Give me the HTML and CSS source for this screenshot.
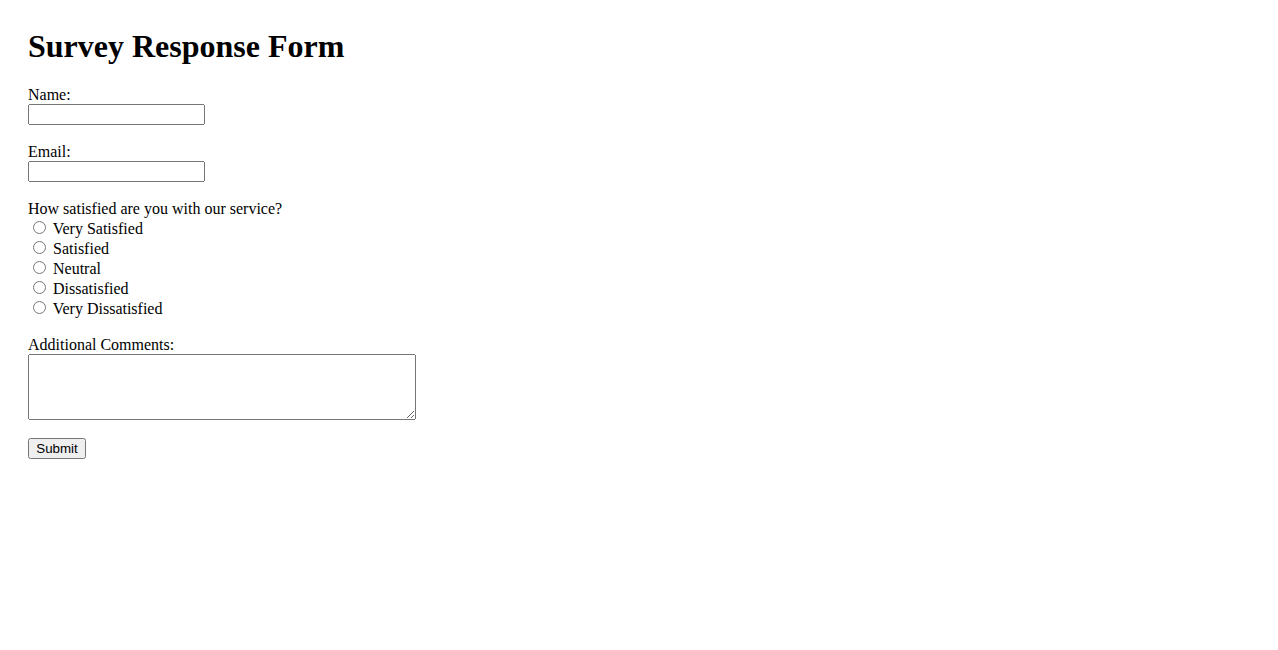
FILE: index.html
```html
<!DOCTYPE html>
<html lang="en">
<head>
  <meta charset="UTF-8">
  <meta name="viewport" content="width=device-width, initial-scale=1.0">
  <title>Survey Response Form</title>
  <link rel="stylesheet" href="styles.css">
</head>
<body>
  <h1>Survey Response Form</h1>
  <form action="#" method="post">
    <div class="form-group">
      <label for="name">Name:</label>
      <input type="text" id="name" name="name">
    </div>
    <div class="form-group">
      <label for="email">Email:</label>
      <input type="email" id="email" name="email">
    </div>
    <div class="form-group">
      <div class="question">How satisfied are you with our service?</div>
      <div class="option"><input type="radio" name="satisfaction" value="very-satisfied"> Very Satisfied</div>
      <div class="option"><input type="radio" name="satisfaction" value="satisfied"> Satisfied</div>
      <div class="option"><input type="radio" name="satisfaction" value="neutral"> Neutral</div>
      <div class="option"><input type="radio" name="satisfaction" value="dissatisfied"> Dissatisfied</div>
      <div class="option"><input type="radio" name="satisfaction" value="very-dissatisfied"> Very Dissatisfied</div>
    </div>
    <div class="form-group">
      <label for="comments">Additional Comments:</label>
      <textarea id="comments" name="comments" rows="4" cols="50"></textarea>
    </div>
    <div class="form-group">
      <input type="submit" value="Submit">
    </div>
  </form>
</body>
</html>
```

FILE: styles.css
```css
body {
  font-family: "Liberation Serif", "Times New Roman", serif;
  font-size: 16px;
  margin: 8px;
  padding: 20px;
  color: #000;
  background-color: #fff;
}

h1 {
  font-size: 32px;
  margin: 0 0 21px 0;
}

.form-group {
  margin-bottom: 18px;
}

.form-group label {
  display: block;
}

.form-group input[type="text"],
.form-group input[type="email"] {
  display: block;
  box-sizing: border-box;
  width: 177px;
  height: 21px;
  font-family: "Liberation Sans", Arial, sans-serif;
  font-size: 13.33px;
}

.form-group textarea {
  display: block;
  box-sizing: border-box;
  width: 388px;
  height: 66px;
  font-family: "Liberation Mono", monospace;
}

.form-group input[type="submit"] {
  font-family: "Liberation Sans", Arial, sans-serif;
  font-size: 13.33px;
  height: 21px;
  width: 58px;
  padding: 1px 6px;
}
```
